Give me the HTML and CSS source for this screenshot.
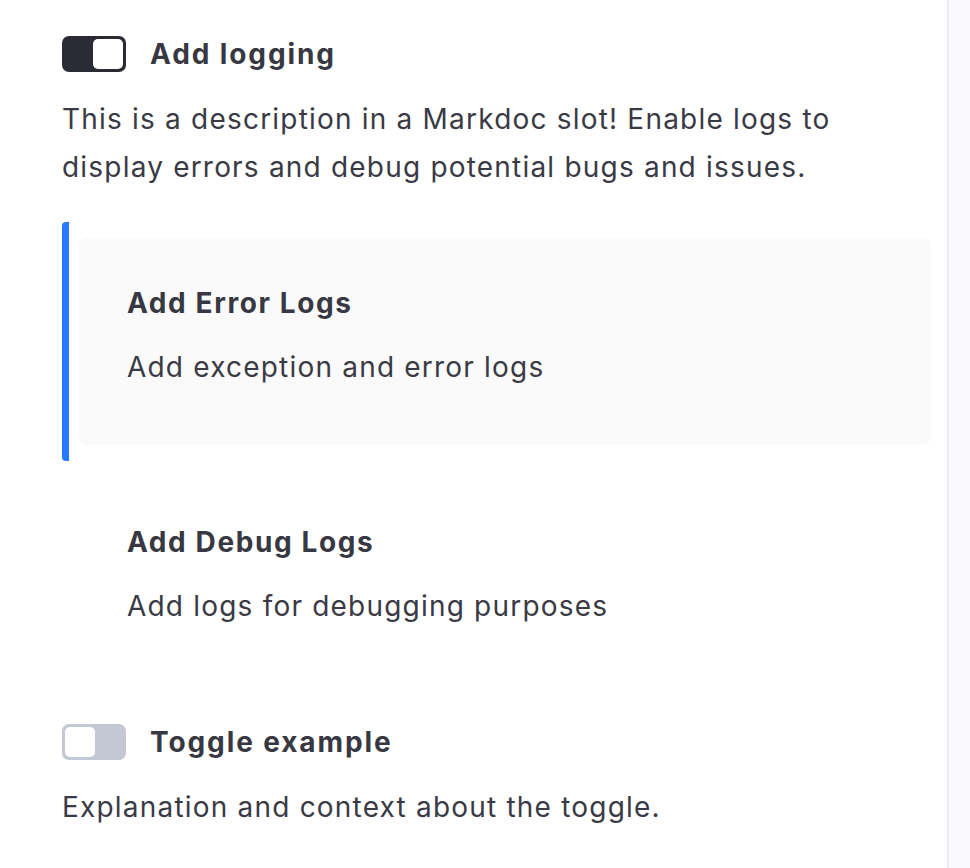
FILE: index.html
```html
<!DOCTYPE html>
<html lang="en">
<head>
<meta charset="utf-8">
<title>Toggle</title>
<link rel="stylesheet" href="styles.css">
</head>
<body>
<div class="page">
  <main class="main">
    <section class="setting">
      <div class="setting-head">
        <span class="toggle toggle-on"><span class="knob"></span></span>
        <h2 class="setting-title">Add logging</h2>
      </div>
      <p class="setting-desc">This is a description in a Markdoc slot! Enable logs to display errors and debug potential bugs and issues.</p>
    </section>

    <div class="options">
      <div class="option option-active">
        <div class="option-box">
          <h3 class="option-title">Add Error Logs</h3>
          <p class="option-desc">Add exception and error logs</p>
        </div>
      </div>
      <div class="option">
        <div class="option-box">
          <h3 class="option-title">Add Debug Logs</h3>
          <p class="option-desc">Add logs for debugging purposes</p>
        </div>
      </div>
    </div>

    <section class="setting">
      <div class="setting-head">
        <span class="toggle toggle-off"><span class="knob"></span></span>
        <h2 class="setting-title">Toggle example</h2>
      </div>
      <p class="setting-desc">Explanation and context about the toggle.</p>
    </section>
  </main>
  <aside class="side"></aside>
</div>
</body>
</html>
```

FILE: styles.css
```css
* { box-sizing: border-box; }
html, body { margin: 0; padding: 0; }
body {
  font-family: Inter, "Noto Sans", "Liberation Sans", sans-serif;
  color: #3a3a45;
  background: #ffffff;
  height: 868px;
  overflow: hidden;
}
.page {
  display: flex;
  height: 868px;
}
.main {
  width: 949px;
  flex: none;
  border-right: 2px solid #ebebf1;
  padding: 36px 16px 0 62px;
}
.side {
  flex: 1;
  background: #fafafc;
}
.setting-head {
  display: flex;
  align-items: center;
  gap: 24px;
  height: 36px;
}
.toggle {
  width: 64px;
  height: 36px;
  border-radius: 7px;
  padding: 3px;
  display: flex;
  flex: none;
}
.toggle-on { background: #2b2b36; justify-content: flex-end; }
.toggle-off { background: #c4c7d4; justify-content: flex-start; }
.knob {
  width: 30px;
  height: 30px;
  background: #ffffff;
  border-radius: 5px;
}
.setting-title {
  margin: 0;
  font-size: 28px;
  font-weight: 700;
  line-height: 36px;
  letter-spacing: 1.9px;
  color: #383842;
}
.setting-desc {
  margin: 23px 0 0 0;
  font-size: 28px;
  line-height: 48px;
  font-weight: 400;
  letter-spacing: 1.2px;
}
.options {
  margin-top: 31px;
  margin-bottom: 24px;
}
.option {
  border-left: 7px solid transparent;
  border-radius: 4px;
  padding: 16px 0 16px 10px;
}
.option-active {
  border-left-color: #2479ff;
}
.option-box {
  height: 207px;
  border-radius: 8px;
  padding: 48px 48px 0 48px;
}
.option-active .option-box {
  background: #fafafa;
}
.option-title {
  margin: 0;
  font-size: 28px;
  line-height: 34px;
  font-weight: 700;
  letter-spacing: 1.6px;
  color: #383842;
}
.option-desc {
  margin: 23px 0 0 0;
  font-size: 28px;
  line-height: 48px;
  letter-spacing: 1.2px;
}
```
